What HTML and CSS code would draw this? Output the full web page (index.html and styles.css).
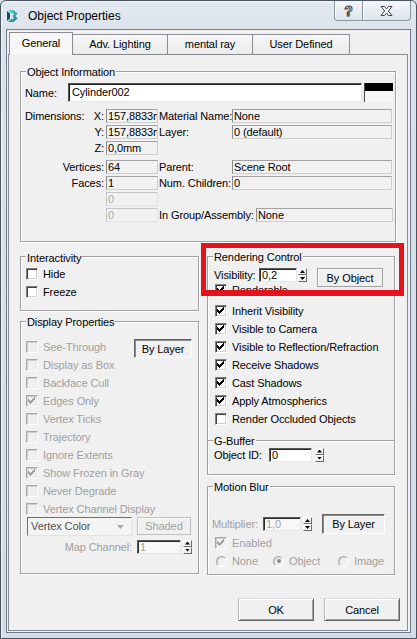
FILE: index.html
```html
<!DOCTYPE html>
<html lang="en">
<head>
    <meta charset="UTF-8">
    <title>Object Properties</title>
    <link rel="stylesheet" href="styles.css">
</head>
<body>
<div class="window">
    <div class="titlebar">
        <svg class="app-icon" width="11" height="14" viewBox="0 0 11 14">
            <defs>
                <linearGradient id="teal" x1="0" y1="0" x2="1" y2="1">
                    <stop offset="0" stop-color="#6fdbd6"/>
                    <stop offset="1" stop-color="#0d7b84"/>
                </linearGradient>
            </defs>
            <path d="M1 1H6.5L10.5 4.5L8.5 7L10.5 9.5L6.5 13H1L3.5 10H5.8L6.8 9L5.5 7L6.8 5L5.8 4H3.5Z" fill="url(#teal)"/>
            <path d="M0 2L3 4.5V9.5L0 12Z" fill="#0b5863"/>
        </svg>
        <span class="title">Object Properties</span>
        <div class="caption-buttons">
            <div class="cap-btn help">?</div>
            <div class="cap-btn close">
                <svg width="13" height="10" viewBox="0 0 13 10">
                    <path d="M1 0.5H4.5L6.5 3L8.5 0.5H12L8.3 5L12 9.5H8.5L6.5 7L4.5 9.5H1L4.7 5Z" fill="#fff" stroke="#3a3f46" stroke-width="1"/>
                </svg>
            </div>
        </div>
    </div>

    <div class="client">
        <div class="tabs">
            <div class="tab active" style="width:64px">General</div>
            <div class="tab" style="width:95px">Adv. Lighting</div>
            <div class="tab" style="width:85px">mental ray</div>
            <div class="tab" style="width:97px">User Defined</div>
        </div>

        <div class="page">
            <!-- object information -->
            <div class="group info">
                <div class="legend"><span>Object Information</span></div>
                <div class="name-row">
                    <span class="name-label">Name:</span>
                    <span class="name-input">Cylinder002</span>
                    <span class="swatch"></span>
                </div>
                <div class="info-row first">
                    <span class="key"><span>Dimensions:</span><span>X:</span></span>
                    <span class="field"><span class="clip">157,8833mm</span></span>
                    <span class="side">Material Name:</span>
                    <span class="field">None</span>
                </div>
                <div class="info-row">
                    <span class="key end">Y:</span>
                    <span class="field"><span class="clip">157,8833mm</span></span>
                    <span class="side">Layer:</span>
                    <span class="field">0 (default)</span>
                </div>
                <div class="info-row">
                    <span class="key end">Z:</span>
                    <span class="field">0,0mm</span>
                </div>
                <div class="info-row gap">
                    <span class="key end">Vertices:</span>
                    <span class="field">64</span>
                    <span class="side">Parent:</span>
                    <span class="field">Scene Root</span>
                </div>
                <div class="info-row">
                    <span class="key end">Faces:</span>
                    <span class="field">1</span>
                    <span class="side">Num. Children:</span>
                    <span class="field">0</span>
                </div>
                <div class="info-row">
                    <span class="key"></span>
                    <span class="field off">0</span>
                </div>
                <div class="info-row assembly">
                    <span class="key"></span>
                    <span class="field off">0</span>
                    <span class="side">In Group/Assembly:</span>
                    <span class="field">None</span>
                </div>
            </div>

            <div class="columns">
                <div class="col">
                    <div class="group interactivity">
                        <div class="legend"><span>Interactivity</span></div>
                        <label class="check"><span class="box"></span>Hide</label>
                        <label class="check"><span class="box"></span>Freeze</label>
                    </div>

                    <div class="group display">
                        <div class="legend"><span>Display Properties</span></div>
                        <div class="see-row">
                            <label class="check off"><span class="box"></span>See-Through</label>
                            <button class="btn pressed by-layer">By Layer</button>
                        </div>
                        <label class="check off"><span class="box"></span>Display as Box</label>
                        <label class="check off"><span class="box"></span>Backface Cull</label>
                        <label class="check off"><span class="box"><svg class="tick" width="7" height="7" viewBox="0 0 7 7"><path d="M6 0h1v1h-1zM5 1h2v1h-2zM0 2h1v1h-1zM4 2h3v1h-3zM0 3h2v1h-2zM3 3h3v1h-3zM0 4h5v1h-5zM1 5h3v1h-3zM2 6h1v1h-1z"/></svg></span>Edges Only</label>
                        <label class="check off"><span class="box"></span>Vertex Ticks</label>
                        <label class="check off"><span class="box"></span>Trajectory</label>
                        <label class="check off"><span class="box"></span>Ignore Extents</label>
                        <label class="check off"><span class="box"><svg class="tick" width="7" height="7" viewBox="0 0 7 7"><path d="M6 0h1v1h-1zM5 1h2v1h-2zM0 2h1v1h-1zM4 2h3v1h-3zM0 3h2v1h-2zM3 3h3v1h-3zM0 4h5v1h-5zM1 5h3v1h-3zM2 6h1v1h-1z"/></svg></span>Show Frozen in Gray</label>
                        <label class="check off"><span class="box"></span>Never Degrade</label>
                        <label class="check off"><span class="box"></span>Vertex Channel Display</label>
                        <div class="vc-row">
                            <span class="select">Vertex Color<i class="arrow"></i></span>
                            <button class="btn off shaded">Shaded</button>
                        </div>
                        <div class="map-row">
                            <span class="map-label">Map Channel:</span>
                            <span class="edit off map-field">1</span>
                            <span class="spin"><i><b></b></i><i class="dn"><b></b></i></span>
                        </div>
                    </div>
                </div>

                <div class="col">
                    <div class="group render">
                        <div class="legend"><span>Rendering Control</span></div>
                        <div class="vis-row">
                            <span class="vis-label">Visibility:</span>
                            <span class="edit vis-field">0,2</span>
                            <span class="spin"><i><b></b></i><i class="dn"><b></b></i></span>
                            <button class="btn by-object">By Object</button>
                        </div>
                        <label class="check renderable"><span class="box"><svg class="tick" width="7" height="7" viewBox="0 0 7 7"><path d="M6 0h1v1h-1zM5 1h2v1h-2zM0 2h1v1h-1zM4 2h3v1h-3zM0 3h2v1h-2zM3 3h3v1h-3zM0 4h5v1h-5zM1 5h3v1h-3zM2 6h1v1h-1z"/></svg></span>Renderable</label>
                        <label class="check"><span class="box"><svg class="tick" width="7" height="7" viewBox="0 0 7 7"><path d="M6 0h1v1h-1zM5 1h2v1h-2zM0 2h1v1h-1zM4 2h3v1h-3zM0 3h2v1h-2zM3 3h3v1h-3zM0 4h5v1h-5zM1 5h3v1h-3zM2 6h1v1h-1z"/></svg></span>Inherit Visibility</label>
                        <label class="check"><span class="box"><svg class="tick" width="7" height="7" viewBox="0 0 7 7"><path d="M6 0h1v1h-1zM5 1h2v1h-2zM0 2h1v1h-1zM4 2h3v1h-3zM0 3h2v1h-2zM3 3h3v1h-3zM0 4h5v1h-5zM1 5h3v1h-3zM2 6h1v1h-1z"/></svg></span>Visible to Camera</label>
                        <label class="check"><span class="box"><svg class="tick" width="7" height="7" viewBox="0 0 7 7"><path d="M6 0h1v1h-1zM5 1h2v1h-2zM0 2h1v1h-1zM4 2h3v1h-3zM0 3h2v1h-2zM3 3h3v1h-3zM0 4h5v1h-5zM1 5h3v1h-3zM2 6h1v1h-1z"/></svg></span>Visible to Reflection/Refraction</label>
                        <label class="check"><span class="box"><svg class="tick" width="7" height="7" viewBox="0 0 7 7"><path d="M6 0h1v1h-1zM5 1h2v1h-2zM0 2h1v1h-1zM4 2h3v1h-3zM0 3h2v1h-2zM3 3h3v1h-3zM0 4h5v1h-5zM1 5h3v1h-3zM2 6h1v1h-1z"/></svg></span>Receive Shadows</label>
                        <label class="check"><span class="box"><svg class="tick" width="7" height="7" viewBox="0 0 7 7"><path d="M6 0h1v1h-1zM5 1h2v1h-2zM0 2h1v1h-1zM4 2h3v1h-3zM0 3h2v1h-2zM3 3h3v1h-3zM0 4h5v1h-5zM1 5h3v1h-3zM2 6h1v1h-1z"/></svg></span>Cast Shadows</label>
                        <label class="check"><span class="box"><svg class="tick" width="7" height="7" viewBox="0 0 7 7"><path d="M6 0h1v1h-1zM5 1h2v1h-2zM0 2h1v1h-1zM4 2h3v1h-3zM0 3h2v1h-2zM3 3h3v1h-3zM0 4h5v1h-5zM1 5h3v1h-3zM2 6h1v1h-1z"/></svg></span>Apply Atmospherics</label>
                        <label class="check"><span class="box"></span>Render Occluded Objects</label>

                        <div class="subgroup">
                            <div class="legend"><span>G-Buffer</span></div>
                            <div class="id-row">
                                <span class="id-label">Object ID:</span>
                                <span class="edit id-field">0</span>
                                <span class="spin"><i><b></b></i><i class="dn"><b></b></i></span>
                            </div>
                        </div>

                        <div class="callout"></div>
                    </div>

                    <div class="group motion">
                        <div class="legend"><span>Motion Blur</span></div>
                        <div class="mult-row">
                            <span class="mult-label">Multiplier:</span>
                            <span class="edit off mult-field">1,0</span>
                            <span class="spin"><i><b></b></i><i class="dn"><b></b></i></span>
                            <button class="btn pressed mb-layer">By Layer</button>
                        </div>
                        <label class="check off"><span class="box"><svg class="tick" width="7" height="7" viewBox="0 0 7 7"><path d="M6 0h1v1h-1zM5 1h2v1h-2zM0 2h1v1h-1zM4 2h3v1h-3zM0 3h2v1h-2zM3 3h3v1h-3zM0 4h5v1h-5zM1 5h3v1h-3zM2 6h1v1h-1z"/></svg></span>Enabled</label>
                        <div class="radio-row">
                            <label class="radio r-none"><span class="dot"></span>None</label>
                            <label class="radio r-object"><span class="dot on"></span>Object</label>
                            <label class="radio"><span class="dot"></span>Image</label>
                        </div>
                    </div>
                </div>
            </div>

            <div class="actions">
                <button class="btn push">OK</button>
                <button class="btn push">Cancel</button>
            </div>
        </div>
    </div>
</div>
</body>
</html>
```

FILE: styles.css
```css
* { box-sizing: border-box; }

body {
    margin: 0;
    background: #d6dee8;
    font-family: "Liberation Sans", Arial, sans-serif;
    font-size: 11px;
    letter-spacing: -0.1px;
    color: #000;
}

/* window frame */
.window {
    width: 417px;
    height: 639px;
    border: 1px solid #4b5461;
    border-radius: 6px 6px 0 0;
    background: linear-gradient(#e4e9f0, #d9e1ea 40px, #d4dce7);
    box-shadow: inset 1px 1px 0 #f3f6f9;
    display: flex;
    flex-direction: column;
}

.titlebar {
    height: 28px;
    flex: none;
    display: flex;
    align-items: center;
    padding-left: 6px;
}
.app-icon { margin: 1px 10px 0 0; }
.title {
    font-size: 12px;
    letter-spacing: 0;
    padding-top: 2px;
}

.caption-buttons {
    display: flex;
    align-self: flex-start;
    margin-left: auto;
    margin-right: 5px;
}
.cap-btn {
    height: 20px;
    border: 1px solid #8995a5;
    border-top: none;
    background: linear-gradient(#f3f6f9, #dfe5ed);
    box-shadow: inset 1px 0 0 #fbfcfd;
    display: flex;
    align-items: center;
    justify-content: center;
}
.cap-btn.help {
    width: 29px;
    border-radius: 0 0 0 4px;
    font-weight: bold;
    font-size: 14px;
    color: #fff;
    -webkit-text-stroke: 1px #3a3f46;
    padding-top: 1px;
}
.cap-btn.close {
    width: 48px;
    border-left: none;
    border-radius: 0 0 4px 0;
}

/* client area */
.client {
    flex: none;
    margin: 0 5px;
    height: 604px;
    border: 1px solid #6d7a8a;
    background: #f0f0f0;
    padding-top: 2px;
}

.tabs {
    display: flex;
    align-items: flex-end;
    height: 22px;
    padding-left: 2px;
}
.tab {
    height: 20px;
    border: 1px solid #898c95;
    border-bottom: none;
    border-left: none;
    background: linear-gradient(#f7f7f7, #ebebeb);
    text-align: center;
    line-height: 19px;
}
.tab.active {
    height: 23px;
    margin-bottom: -1px;
    border-left: 1px solid #898c95;
    background: #f6f6f6;
    line-height: 21px;
    position: relative;
    z-index: 1;
}

.page {
    margin-left: 1px;
    width: 400px;
    height: 577px;
    border: 1px solid #898c95;
    padding: 16px 0 0 11px;
}

/* group boxes */
.group {
    border: 1px solid #a0a0a0;
    box-shadow: 1px 1px 0 #fff, inset 1px 1px 0 #fff;
    position: relative;
}
.legend {
    height: 14px;
    line-height: 14px;
    margin-top: -7px;
    padding-left: 5px;
}
.legend span {
    background: #f0f0f0;
    padding: 0 1px;
}

.info {
    width: 376px;
    padding-bottom: 19px;
}

.name-row {
    display: flex;
    align-items: center;
    height: 19px;
    margin-top: 4px;
}
.name-label {
    width: 47px;
    padding-left: 4px;
}
.name-input {
    width: 294px;
    height: 19px;
    line-height: 16px;
    padding-left: 3px;
    background: #fff;
    border: 1px solid;
    border-color: #555 #e6e6e6 #e6e6e6 #555;
    box-shadow: inset 1px 1px 0 #1c1c1c;
}
.swatch {
    width: 29px;
    height: 19px;
    margin-left: 2px;
    border-left: 1px solid #4a4a4a;
    background: linear-gradient(#000 0 8px, #f7f7f7 8px);
}

.info-row {
    display: grid;
    grid-template-columns: 85px 52px 74px 160px;
    align-items: center;
    height: 14px;
    margin-top: 2px;
}
.info-row.first { margin-top: 7px; }
.info-row.gap { margin-top: 5px; }
.info-row.assembly { grid-template-columns: 85px 52px 98px 137px; }
.key {
    display: flex;
    justify-content: space-between;
    padding: 0 2px 0 4px;
}
.key.end { justify-content: flex-end; }
.side { padding-left: 1px; white-space: nowrap; }

.field {
    height: 14px;
    line-height: 12px;
    padding-left: 1px;
    border: 1px solid;
    border-color: #a3a3a3 #cfcfcf #cfcfcf #8c8c8c;
    background: #f1f1f1;
    white-space: nowrap;
    overflow: hidden;
}
.field .clip {
    display: block;
    width: 49px;
    overflow: hidden;
}
.field.off {
    color: #a8a8a8;
    border-color: #c4c4c4 #e2e2e2 #e2e2e2 #c4c4c4;
}

/* two columns under the info box */
.columns {
    display: flex;
    gap: 8px;
    width: 375px;
    margin-top: 14px;
}
.col { display: flex; flex-direction: column; }
.col:first-child { width: 179px; }
.col:last-child { width: 188px; }

.interactivity { padding: 1px 0 9px; }
.display { margin-top: 10px; padding-bottom: 19px; }
.display .see-row { margin-top: 9px; }

/* checkboxes */
.check {
    display: flex;
    align-items: center;
    height: 18px;
    padding-left: 5px;
    white-space: nowrap;
}
.box {
    width: 12px;
    height: 12px;
    flex: none;
    margin-right: 5px;
    padding: 1px 0 0 1px;
    background: #fff;
    border: 1px solid;
    border-color: #808080 #fff #fff #808080;
    box-shadow: inset 1px 1px 0 #404040, inset -1px -1px 0 #d4d0c8;
}
.tick { display: block; fill: #000; shape-rendering: crispEdges; }
.check.off { color: #a0a0a0; }
.check.off .box {
    background: #f0f0f0;
    border-color: #a8a8a8 #fff #fff #a8a8a8;
    box-shadow: inset 1px 1px 0 #cdcdcd, inset -1px -1px 0 #e8e8e8;
}
.check.off .tick { fill: #a0a0a0; }

.see-row {
    display: flex;
    align-items: flex-start;
    height: 18px;
}

/* buttons */
.btn {
    font: inherit;
    letter-spacing: inherit;
    color: #000;
    padding: 0;
    margin: 0;
    background: #f0f0f0;
    border: 1px solid #a0a0a0;
    box-shadow: inset 1px 1px 0 #fff;
    text-align: center;
}
.btn.pressed {
    border-color: #646464 #fff #fff #646464;
    box-shadow: inset 1px 1px 0 #8a8a8a;
}
.btn.off {
    color: #a0a0a0;
    border-color: #c0c0c0;
}
.by-layer {
    width: 58px;
    height: 19px;
    margin: 1px 0 0 auto;
    margin-right: 6px;
}

.vc-row {
    display: flex;
    align-items: flex-start;
    margin-top: -1px;
}
.select {
    position: relative;
    width: 105px;
    height: 19px;
    margin-left: 6px;
    line-height: 16px;
    padding-left: 3px;
    color: #505050;
    background: #f4f4f4;
    border: 1px solid;
    border-color: #6e6e6e #e4e4e4 #e4e4e4 #6e6e6e;
}
.select .arrow {
    position: absolute;
    right: 7px;
    top: 7px;
    width: 7px;
    height: 4px;
    background: #a8a8a8;
    clip-path: polygon(0 0, 100% 0, 50% 100%);
}
.shaded {
    width: 54px;
    height: 18px;
    margin-left: 5px;
}

.map-row {
    display: flex;
    align-items: center;
    height: 15px;
    margin-top: 3px;
}
.map-label {
    width: 111px;
    text-align: right;
    color: #a0a0a0;
}
.map-field { width: 44px; margin-left: 5px; }

/* edit fields and spinners */
.edit {
    height: 14px;
    line-height: 12px;
    padding-left: 2px;
    background: #fff;
    border: 1px solid;
    border-color: #5a5a5a #e6e6e6 #e6e6e6 #5a5a5a;
    box-shadow: inset 1px 1px 0 #2a2a2a;
}
.edit.off {
    color: #a0a0a0;
    background: #f8f8f8;
}

.spin {
    display: flex;
    flex-direction: column;
    width: 9px;
    height: 14px;
    margin-left: 2px;
}
.spin i {
    flex: 1;
    display: flex;
    align-items: center;
    justify-content: center;
    background: #f0f0f0;
    border: 1px solid;
    border-color: #fff #6a6a6a #6a6a6a #fff;
}
.spin b {
    width: 5px;
    height: 3px;
    background: #000;
    clip-path: polygon(50% 0, 100% 100%, 0 100%);
}
.spin .dn b { clip-path: polygon(0 0, 100% 0, 50% 100%); }

/* rendering control */
.render { padding-bottom: 12px; }
.render .check { padding-left: 7px; }
.render .renderable { margin: -3px 0 3px; }
.vis-row {
    display: flex;
    align-items: flex-start;
    height: 16px;
    margin: 4px 0 0 6px;
}
.vis-label { width: 45px; line-height: 14px; }
.vis-field { width: 38px; }
.vis-row .spin { margin-left: 1px; }
.by-object {
    width: 66px;
    height: 19px;
    margin-left: 10px;
}

.subgroup {
    margin-top: 12px;
    border-top: 1px solid #a0a0a0;
    box-shadow: inset 0 1px 0 #fff;
}
.id-row {
    display: flex;
    align-items: center;
    height: 15px;
    margin: -1px 0 0 6px;
}
.id-label { width: 55px; }
.id-field { width: 43px; }
.id-row .spin { margin-left: 3px; }

/* highlight frame drawn over the visibility controls */
.callout {
    position: absolute;
    left: -7px;
    top: -14px;
    width: 203px;
    height: 53px;
    border: 5px solid #e3121c;
    border-bottom-width: 6px;
}

/* motion blur */
.motion { margin-top: 11px; padding-bottom: 4px; }
.motion .check { padding-left: 7px; }
.mult-row {
    display: flex;
    align-items: center;
    height: 20px;
    margin: 20px 0 0 4px;
}
.mult-label { width: 51px; color: #a0a0a0; }
.mult-field { width: 38px; }
.mb-layer {
    width: 63px;
    height: 20px;
    margin-left: 10px;
}

.radio-row {
    display: flex;
    align-items: center;
    height: 18px;
    padding-left: 8px;
    color: #a0a0a0;
}
.radio { display: flex; align-items: center; }
.r-none { width: 57px; }
.r-object { width: 65px; }
.dot {
    width: 11px;
    height: 11px;
    margin-right: 5px;
    border-radius: 50%;
    border: 1px solid;
    border-color: #a8a8a8 #fff #fff #a8a8a8;
    background: #f0f0f0;
    box-shadow: inset 1px 1px 0 #d0d0d0;
    display: flex;
    align-items: center;
    justify-content: center;
}
.dot.on::after {
    content: "";
    width: 4px;
    height: 4px;
    border-radius: 50%;
    background: #8a8a8a;
}

/* dialog buttons */
.actions {
    display: flex;
    justify-content: flex-end;
    gap: 10px;
    margin-top: 23px;
    padding-right: 7px;
}
.btn.push {
    width: 76px;
    height: 23px;
    border-color: #dcdcdc #646464 #646464 #b4b4b4;
    box-shadow: inset 1px 1px 0 #fff, inset -1px -1px 0 #a0a0a0;
}
```
